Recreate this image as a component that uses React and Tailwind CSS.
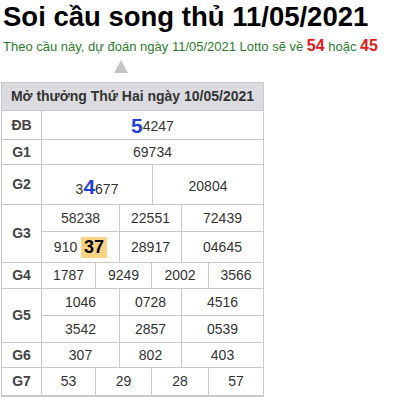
import React from "react";

const B = "border-[#c9c9c9]";

function Label({ children }) {
  return (
    <div className={`w-[40px] shrink-0 border-r ${B} flex items-center justify-center font-bold text-[14px] text-[#444]`}>
      {children}
    </div>
  );
}

function Cells({ widths, values, h }) {
  return (
    <div className={`flex ${h}`}>
      {values.map((v, i) => (
        <div
          key={i}
          className={`${widths[i]} flex items-center justify-center ${i > 0 ? `border-l ${B}` : ""}`}
        >
          {v}
        </div>
      ))}
    </div>
  );
}

const W3 = ["w-[77px]", "w-[62px]", "w-[82px]"];
const W4 = ["w-[53px]", "w-[56px]", "w-[57px]", "w-[55px]"];
const W2 = ["w-[110px]", "w-[111px]"];

export default function App() {
  return (
    <div className="bg-white w-[401px] h-[402px] overflow-hidden" style={{ fontFamily: '"Liberation Sans", Arial, sans-serif' }}>
      <div className="h-[33px] leading-[33px] text-[27.5px] font-bold text-black pl-[3px] whitespace-nowrap">
        Soi cầu song thủ 11/05/2021
      </div>
      <div className="h-[25px] pt-[3px] leading-[20px] text-[13px] text-[#2e7d2e] pl-[3px] whitespace-nowrap">
        Theo cầu này, dự đoán ngày 11/05/2021 Lotto sẽ về{" "}
        <span className="text-[16px] font-bold text-[#e31b1b]">54</span> hoặc{" "}
        <span className="text-[16px] font-bold text-[#e31b1b]">45</span>
      </div>
      <div className="ml-[114px] mt-[2px] w-0 h-0 border-l-[7px] border-r-[7px] border-b-[13px] border-l-transparent border-r-transparent border-b-[#c4c4c4]" />
      <div className={`ml-[1px] mt-[9px] w-[263px] border border-b-2 ${B} text-[14px] text-[#333]`}>
        <div className="h-[27px] bg-[#dcdce0] flex items-center justify-center font-bold text-[14px] text-[#333]">
          Mở thưởng Thứ Hai ngày 10/05/2021
        </div>
        {/* DB */}
        <div className={`flex h-[29px] border-t ${B}`}>
          <Label>ĐB</Label>
          <div className="flex-1 flex items-center justify-center">
            <span className="text-[21px] font-bold text-[#1f3fd6] leading-none">5</span>
            <span className="mt-[3px]">4247</span>
          </div>
        </div>
        {/* G1 */}
        <div className={`flex h-[25px] border-t ${B}`}>
          <Label>G1</Label>
          <div className="flex-1 flex items-center justify-center">69734</div>
        </div>
        {/* G2 */}
        <div className={`flex h-[40px] border-t ${B}`}>
          <Label>G2</Label>
          <div className="flex-1">
            <Cells
              widths={W2}
              h="h-full"
              values={[
                <span className="flex items-baseline mt-[4px]">
                  3<span className="text-[21px] font-bold text-[#1f3fd6]">4</span>677
                </span>,
                <span className="mt-[4px]">20804</span>,
              ]}
            />
          </div>
        </div>
        {/* G3 */}
        <div className={`flex h-[58px] border-t ${B}`}>
          <Label>G3</Label>
          <div className="flex-1 flex flex-col">
            <Cells widths={W3} h="h-[26px]" values={["58238", "22551", "72439"]} />
            <div className={`border-t ${B}`}>
              <Cells
                widths={W3}
                h="h-[30px]"
                values={[
                  <span className="flex items-center">
                    910&nbsp;
                    <span className="bg-[#fdd383] text-[18px] font-bold text-black leading-[21px] px-[3px]">37</span>
                  </span>,
                  "28917",
                  "04645",
                ]}
              />
            </div>
          </div>
        </div>
        {/* G4 */}
        <div className={`flex h-[26px] border-t ${B}`}>
          <Label>G4</Label>
          <div className="flex-1">
            <Cells widths={W4} h="h-full" values={["1787", "9249", "2002", "3566"]} />
          </div>
        </div>
        {/* G5 */}
        <div className={`flex h-[54px] border-t ${B}`}>
          <Label>G5</Label>
          <div className="flex-1 flex flex-col">
            <Cells widths={W3} h="h-[26px]" values={["1046", "0728", "4516"]} />
            <div className={`border-t ${B}`}>
              <Cells widths={W3} h="h-[26px]" values={["3542", "2857", "0539"]} />
            </div>
          </div>
        </div>
        {/* G6 */}
        <div className={`flex h-[25px] border-t ${B}`}>
          <Label>G6</Label>
          <div className="flex-1">
            <Cells widths={W3} h="h-full" values={["307", "802", "403"]} />
          </div>
        </div>
        {/* G7 */}
        <div className={`flex h-[28px] border-t ${B}`}>
          <Label>G7</Label>
          <div className="flex-1">
            <Cells widths={W4} h="h-full" values={["53", "29", "28", "57"]} />
          </div>
        </div>
      </div>
    </div>
  );
}
